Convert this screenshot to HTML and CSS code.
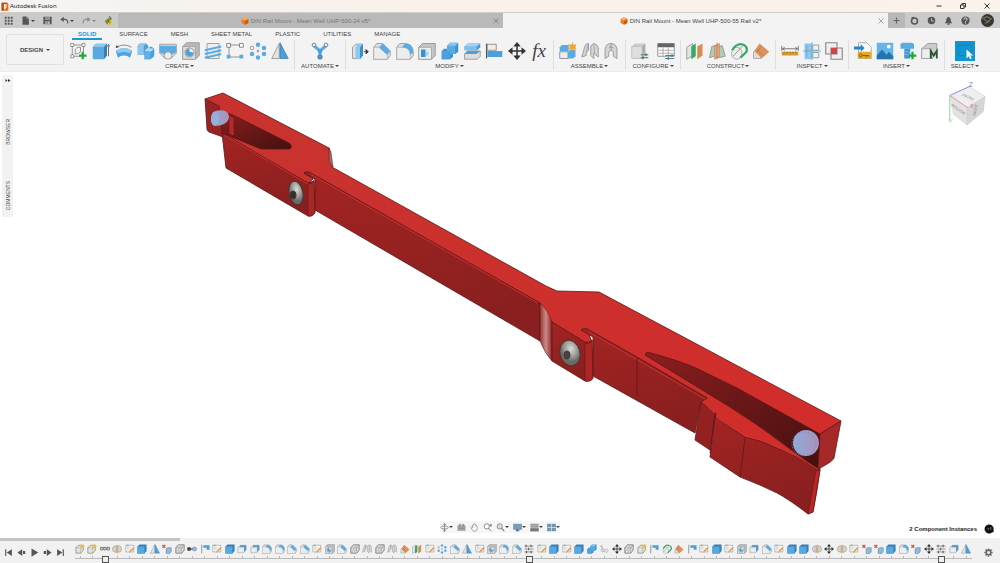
FILE: index.html
```
<!DOCTYPE html>
<html lang="en">
<head>
  <meta charset="UTF-8">
  <meta name="viewport" content="width=device-width, initial-scale=1.0">
  <title>Autodesk Fusion</title>
  <link rel="stylesheet" href="styles.css">
</head>
<body>

<!-- icon sprite -->
<svg class="sprite" aria-hidden="true">
  <symbol id="i-sketch" viewBox="0 0 24 24">
    <path d="M3 4h15M3 4v15M18 4v9M3 19h10" fill="none" stroke="#777" stroke-width="1"/>
    <path d="M7 16V11q0-4 7-4v6q-2 3-7 3z" fill="none" stroke="#777"/>
    <path d="M1 2h4v4H1zM16 2h4v4h-4zM1 17h4v4H1z" fill="#fff" stroke="#777"/>
    <path d="M17 13v10M12 18h10" stroke="#22a53c" stroke-width="3"/>
  </symbol>
  <symbol id="i-extrude" viewBox="0 0 24 24">
    <path d="M1 6l4-4h15l-4 4z" fill="#8ec8ee"/>
    <path d="M1 6h15v17H1z" fill="#59a9e0"/>
    <path d="M16 6l4-4v16l-4 5z" fill="#347fb8"/>
    <path d="M22 5v14M20.500 6L22 3l1.500 3" fill="none" stroke="#444"/>
  </symbol>
  <symbol id="i-revolve" viewBox="0 0 24 24">
    <path d="M1 12q11-8 22 0l-3 9q-3-3-8-3t-8 3z" fill="#4ea3df"/>
    <path d="M1 12q11-8 22 0l-4 3q-7-4-14 0z" fill="#91caef"/>
    <path d="M2 7q10-6 20 0" fill="none" stroke="#666"/>
    <path d="M1 8l1-4 3 3z" fill="#444"/>
  </symbol>
  <symbol id="i-loft" viewBox="0 0 24 24">
    <path d="M1 6q0-4 5-4h6l3 3v3l4-2 4 3v10l-5 4h-8v-6H1z" fill="#4b9fda"/>
    <path d="M1 6q0-4 5-4h6l-3 4v11H1z" fill="#8cc6ed"/>
    <path d="M10 12l4-4 9 1-5 4z" fill="#b7dcf4"/>
    <path d="M10 12l8 1v10h-8z" fill="#5fb0e5"/>
  </symbol>
  <symbol id="i-sweep" viewBox="0 0 24 24">
    <path d="M1 3h22v12l-7 7H8l-7-7z" fill="#e4e4e4" stroke="#888"/>
    <path d="M1 5h22v9l-6 3q-5-6-10 0l-6-3z" fill="#5aabe2"/>
    <circle cx="12" cy="18" r="5" fill="#eee" stroke="#888"/>
  </symbol>
  <symbol id="i-hole" viewBox="0 0 24 24">
    <path d="M1 6l5-5h17v17l-5 5H1z" fill="#b9b9b9" stroke="#8c8c8c"/>
    <path d="M1 6h17v17H1z" fill="#dcdcdc" stroke="#999"/>
    <circle cx="10" cy="14" r="6" fill="#f5f5f5" stroke="#777"/>
    <path d="M10 9a5 5 0 1 0 5 5l-5-1z" fill="#4b9fda"/>
  </symbol>
  <symbol id="i-thread" viewBox="0 0 24 24">
    <path d="M4 2h16v20H4z" fill="#eee" stroke="#888"/>
    <path d="M1 11l22-5M1 16l22-5M1 21l22-5" stroke="#5aabe2" stroke-width="2.500"/>
  </symbol>
  <symbol id="i-rect" viewBox="0 0 24 24">
    <path d="M4 4h16M4 4v16M4 20h16" fill="none" stroke="#777"/>
    <path d="M1 2h5v5H1zM18 2h5v5h-5z" fill="#fff" stroke="#666"/>
    <path d="M1 17h5v5H1zM18 17h5v5h-5z" fill="#5aabe2"/>
  </symbol>
  <symbol id="i-circpat" viewBox="0 0 24 24">
    <g fill="#5aabe2"><circle cx="12" cy="3.500" r="3"/><circle cx="20" cy="8" r="3"/><circle cx="20" cy="16" r="3"/><circle cx="12" cy="20.500" r="3"/><circle cx="4" cy="16" r="3"/></g>
    <circle cx="4" cy="8" r="2.500" fill="#eee" stroke="#888"/>
    <path d="M12 10v4M10 12h4" stroke="#777"/>
  </symbol>
  <symbol id="i-mirror" viewBox="0 0 24 24">
    <path d="M11 2v20H1z" fill="#e5e5e5" stroke="#888"/>
    <path d="M12 1v21h11z" fill="#4b9fda" stroke="#3a80b2"/>
  </symbol>
  <symbol id="i-automate" viewBox="0 0 24 24">
    <path d="M4 5l8 7 8-7M12 12v8" fill="none" stroke="#5aabe2" stroke-width="4"/>
    <g fill="#e9f3fa" stroke="#567"><circle cx="4" cy="4" r="2.500"/><circle cx="20" cy="4" r="2.500"/></g>
    <circle cx="12" cy="20" r="3" fill="#4b9fda" stroke="#567"/><circle cx="12" cy="12" r="3" fill="#4b9fda"/>
  </symbol>
  <symbol id="i-press" viewBox="0 0 24 24">
    <path d="M2 7l4-4h5l-3 4v15H2z" fill="#e1e1e1" stroke="#888"/>
    <path d="M6 7l4-5h6l-4 5v16H6z" fill="#8ec8ee"/>
    <path d="M12 7l4-5v16l-4 5z" fill="#3c8fcb"/>
    <path d="M17 13h5M20 10l3 3-3 3z" fill="#333" stroke="#333"/>
  </symbol>
  <symbol id="i-chamfer" viewBox="0 0 24 24">
    <path d="M1 7l4-5h8l10 10v6l-4 5H1z" fill="#dedede" stroke="#8a8a8a"/>
    <path d="M1 7h7l11 10v6H1z" fill="#ededed" stroke="#aaa"/>
    <path d="M8 7l5-5 10 10-4 5z" fill="#5aabe2"/>
  </symbol>
  <symbol id="i-fillet" viewBox="0 0 24 24">
    <path d="M1 7l4-5h6q12 0 12 12v4l-4 5H1z" fill="#dedede" stroke="#8a8a8a"/>
    <path d="M1 7h7q11 0 11 10v6H1z" fill="#ededed" stroke="#aaa"/>
    <path d="M8 7l4-5q11 0 11 12l-4 3q0-10-11-10z" fill="#5aabe2"/>
  </symbol>
  <symbol id="i-shell" viewBox="0 0 24 24">
    <path d="M1 7l5-5h17v16l-5 5H1z" fill="#c5c5c5" stroke="#888"/>
    <path d="M1 7h17v16H1z" fill="#eee" stroke="#999"/>
    <path d="M4 10h11v10H4z" fill="#d7e9f5"/><path d="M4 10h6v10H4z" fill="#3c8fcb"/><path d="M10 14h5l-5 6z" fill="#8ec8ee"/>
  </symbol>
  <symbol id="i-combine" viewBox="0 0 24 24">
    <path d="M8 5l4-4h11v12l-4 3h-3v4l-4 3H1V12l3-3h4z" fill="#3f94d1"/>
    <path d="M8 5h11v11H8z" fill="#5aabe2"/><path d="M1 12h11v11H1z" fill="#4ba1dd"/>
    <path d="M8 5l4-4h11l-4 4z" fill="#8ec8ee"/>
  </symbol>
  <symbol id="i-split" viewBox="0 0 24 24">
    <path d="M2 6l4-4h17v5l-4 4H2z" fill="#4b9fda"/><path d="M2 6h16v5H2z" fill="#7cc0ec"/><path d="M2 6l4-4h17l-5 4z" fill="#a5d4f2"/>
    <path d="M2 16l4-4h17v7l-4 4H2z" fill="#ddd" stroke="#888"/><path d="M2 16l4-4h17l-5 4z" fill="#4b9fda"/>
  </symbol>
  <symbol id="i-align" viewBox="0 0 24 24">
    <path d="M2 2v20" stroke="#555" stroke-width="1.500"/>
    <path d="M3 3h12v8H3z" fill="#eee" stroke="#777"/><path d="M3 12h20v8H3z" fill="#4b9fda"/>
  </symbol>
  <symbol id="i-move" viewBox="0 0 24 24">
    <path d="M12 3v18M3 12h18" stroke="#333" stroke-width="2"/>
    <path d="M12 0l5 6H7zM12 24l5-6H7zM0 12l6-5v10zM24 12l-6-5v10z" fill="#333"/>
  </symbol>
  <symbol id="i-newcomp" viewBox="0 0 24 24">
    <path d="M1 7l3-3h9v8H1z" fill="#5aabe2"/><path d="M1 13h11v9H1z" fill="#eee" stroke="#777"/>
    <path d="M12 13l3-3h7v9l-3 3h-7z" fill="#5aabe2"/>
    <path d="M18 0l1.500 4 4-1.500-2 4 2 3-4-.5L18 13l-1.500-4-4 .5 2-3-2-4 4 1.500z" fill="#f2a51e"/>
  </symbol>
  <symbol id="i-joint" viewBox="0 0 24 24">
    <path d="M1 20l4-14q1-4 5-4v9l-3 3v4zM23 20V8q-2-6-6-6l-4 3v13l4 4v-7z" fill="#d5d5d5" stroke="#888"/>
    <path d="M10 2L7 14M17 2l1 13" fill="none" stroke="#999"/>
  </symbol>
  <symbol id="i-asbuilt" viewBox="0 0 24 24">
    <path d="M4 22V10q1-8 8-8t8 8v12l-5-3v-6l-3-2-3 2v6z" fill="#d5d5d5" stroke="#888"/>
    <path d="M12 2v9M9 8q3-3 6 0" fill="none" stroke="#888"/>
  </symbol>
  <symbol id="i-config" viewBox="0 0 24 24">
    <path d="M1 6l4-4h14v16l-4 4H1z" fill="#ccc"/><path d="M1 6h14v16H1z" fill="#dedede" stroke="#bbb"/><path d="M15 6l4-4v13h-4z" fill="#aaa"/>
    <path d="M13 17h10M13 21h10M20 15v4M16 19v4" stroke="#4c6b68" stroke-width="1.500"/>
  </symbol>
  <symbol id="i-table" viewBox="0 0 24 24">
    <path d="M1 2h22v17H1z" fill="#fff" stroke="#777"/><path d="M1 2h22v5H1z" fill="#666"/>
    <path d="M2 11h20M2 15h20M8 7v12M15 7v12" stroke="#999"/>
    <path d="M11 18h12M11 22h12M20 16v4M15 20v4" stroke="#4b7f9e" stroke-width="1.500"/>
  </symbol>
  <symbol id="i-plane" viewBox="0 0 24 24">
    <path d="M1 7l8-5v16l-8 5z" fill="#e4e4e4" stroke="#888"/><path d="M7 6l6-4v17l-6 4z" fill="#36a96b"/><path d="M15 6l7-4v16l-7 5z" fill="#d98b52"/>
  </symbol>
  <symbol id="i-midplane" viewBox="0 0 24 24">
    <path d="M5 6l6-2v14l-9 3zM14 6l5-1 4 14-9 2z" fill="#a9cfb7" stroke="#888"/><path d="M9 6l6-4v17l-6 4z" fill="#e7b695" stroke="#c87945"/>
    <path d="M12 1v22" stroke="#c65a32"/>
  </symbol>
  <symbol id="i-tangent" viewBox="0 0 24 24">
    <ellipse cx="9" cy="15" rx="7" ry="8" fill="#eee" stroke="#999"/>
    <path d="M3 11Q8 2 16 3q8 2 6 10l-8 8" fill="none" stroke="#32a968" stroke-width="3"/>
    <path d="M4 19L17 5" stroke="#777"/>
  </symbol>
  <symbol id="i-angle" viewBox="0 0 24 24">
    <path d="M2 13l10-9v18H2z" fill="#ddd" stroke="#999"/><path d="M10 2l13 11-10 9L3 12z" fill="#dd935e"/>
    <path d="M7 10l8 8M12 6l-6 8" stroke="#ac7044"/>
  </symbol>
  <symbol id="i-measure" viewBox="0 0 24 24">
    <path d="M1 5v7M23 5v7M2 9h20M5 7L2 9l3 2M19 7l3 2-3 2" fill="none" stroke="#555"/><path d="M1 13h22v5H1z" fill="#d69a2c"/><path d="M4 13v2M8 13v2M12 13v2M16 13v2M20 13v2" stroke="#825e1b"/>
  </symbol>
  <symbol id="i-section" viewBox="0 0 24 24">
    <path d="M2 2h10v21H2z" fill="#8fc7ec"/><path d="M13 4h8v7h-8zM13 14h8v7h-8z" fill="#eaf3f8" stroke="#789"/>
    <path d="M0 12h24M12 0v24M5 4v16" stroke="#6a9dc0"/>
  </symbol>
  <symbol id="i-interfere" viewBox="0 0 24 24">
    <path d="M1 1h15v15H1zM8 8h15v15H8z" fill="#eee" stroke="#888" stroke-width="1.500"/><path d="M8 8h8v8H8z" fill="#d54245"/>
  </symbol>
  <symbol id="i-derive" viewBox="0 0 24 24">
    <path d="M6 1h11l6 6v15H6z" fill="#f7f7f7" stroke="#999"/><path d="M5 13h18v9H5z" fill="#e7aa21"/>
    <path d="M0 6h9V3l5 5-5 5v-3H0z" fill="#2585c7"/><circle cx="9" cy="18" r="2" fill="none" stroke="#6d5012"/><path d="M11 18h9M16 18v3M19 18v2" stroke="#6d5012"/>
  </symbol>
  <symbol id="i-image" viewBox="0 0 24 24">
    <path d="M1 1h22v22H1z" fill="#66b5e9"/><path d="M1 18l7-8 6 7 3-4 6 6v4H1z" fill="#2275ad"/><circle cx="17" cy="6" r="2.500" fill="#fff"/>
  </symbol>
  <symbol id="i-fastener" viewBox="0 0 24 24">
    <path d="M2 3l2-2h14l2 2v6H2z" fill="#5aabe2"/><path d="M7 9h8v13H7z" fill="#4195d2"/><path d="M7 12l8 2M7 16l8 2" stroke="#8ec8ee"/>
    <path d="M18 13v10M13 18h10" stroke="#22a53c" stroke-width="3"/>
  </symbol>
  <symbol id="i-mcmaster" viewBox="0 0 24 24">
    <path d="M1 9l8-7h12v10l-6 10H1z" fill="#ccc" stroke="#888"/><path d="M1 9h13v13H1z" fill="#eee" stroke="#999"/>
    <path d="M13 22V12l4 6 4-6v10" fill="none" stroke="#285630" stroke-width="2.500"/>
  </symbol>
  <symbol id="i-sk" viewBox="0 0 24 24">
    <path d="M2 3h19v16H2z" fill="#fafafa" stroke="#999" stroke-width="1.500"/><path d="M5 8h10M5 12h8M7 5v11" stroke="#a9b9bd"/>
    <path d="M9 21l2-5L20 7l3 3-9 9z" fill="#e0a45e"/><path d="M3 3h6" stroke="#5dbb87" stroke-width="2"/>
  </symbol>
  <symbol id="i-comp" viewBox="0 0 24 24">
    <path d="M2 9l6-6h12v12l-6 7H2z" fill="#e6e3dd" stroke="#777" stroke-width="1.500"/><path d="M2 9h12v13M14 9l6-6" fill="none" stroke="#888"/>
    <circle cx="18" cy="6" r="5" fill="#f3bd45"/>
  </symbol>
  <symbol id="i-dots" viewBox="0 0 24 24"><path d="M1 8h6v6H1zM9 8h6v6H9zM17 8h6v6h-6z" fill="#ddd" stroke="#666" stroke-width="2"/></symbol>
  <symbol id="i-link" viewBox="0 0 24 24"><circle cx="5" cy="12" r="5" fill="#444"/><path d="M9 12h8" stroke="#555" stroke-width="3"/><circle cx="18" cy="12" r="5" fill="#8ebddd" stroke="#669"/></symbol>
  <symbol id="i-flag" viewBox="0 0 24 24"><path d="M4 2v21" stroke="#aaa" stroke-width="3"/><path d="M8 3h15v11h-7V9H8z" fill="#4b9fda"/></symbol>
  <symbol id="i-solid" viewBox="0 0 24 24"><path d="M1 6l5-5h17v16l-5 6H1z" fill="#347fb8"/><path d="M1 6h17v17H1z" fill="#55a8e0"/></symbol>
  <symbol id="i-grey" viewBox="0 0 24 24"><path d="M2 9l6-7h14v13l-6 7H2z" fill="#ddd" stroke="#777" stroke-width="2"/><path d="M2 9h14v13M16 9l6-7M5 18l9-13M9 20l10-14" fill="none" stroke="#888"/></symbol>
  <symbol id="i-offset" viewBox="0 0 24 24"><path d="M2 9l6-6h14v11l-6 7H2z" fill="#e0e6e9" stroke="#888"/><path d="M8 3h14v11l-5 6V8H5z" fill="#5899c4"/><path d="M5 11h8v8H5z" fill="#eee"/></symbol>
  <symbol id="i-rigid" viewBox="0 0 24 24"><path d="M1 2l7 7M8 2L1 9" stroke="#c6543f" stroke-width="3"/><path d="M10 12l3-3h9v10l-4 4h-8z" fill="#8dbbd9" stroke="#5c88a7" stroke-width="1.500"/></symbol>
  <symbol id="i-tjoint" viewBox="0 0 24 24"><path d="M10 4q-9 0-9 8t9 8zM14 4q9 0 9 8t-9 8z" fill="#d7d7c8" stroke="#999" stroke-width="1.500"/><path d="M12 2v20" stroke="#d6874b" stroke-width="2"/></symbol>
  <symbol id="i-bars" viewBox="0 0 24 24"><path d="M1 5h22M1 12h22M1 19h22" stroke="#888" stroke-width="2"/><path d="M5 2v6M17 2v6M11 9v6M6 16v6M17 16v6" stroke="#666" stroke-width="3"/></symbol>
  <symbol id="i-pair" viewBox="0 0 24 24"><path d="M2 3l8 9M7 2v8" stroke="#aaa" stroke-width="2"/><circle cx="9" cy="15" r="4" fill="#ddd" stroke="#888"/><circle cx="18" cy="16" r="4" fill="#eee" stroke="#888"/></symbol>
  <symbol id="i-cube" viewBox="0 0 24 24"><path d="M12 1l10 5v12l-10 5L2 18V6z" fill="#ed7b24"/><path d="M12 1l10 5-10 5L2 6z" fill="#ffab5d"/><path d="M12 11l10-5v12l-10 5z" fill="#c95d13"/></symbol>
  <symbol id="i-monitor" viewBox="0 0 24 24"><path d="M1 3h22v14H1z" fill="#779dbd" stroke="#567"/><path d="M9 17h6v4H9zM6 21h12" fill="#567" stroke="#567"/></symbol>
</svg>

<div class="app">
  <header class="titlebar">
    <svg class="logo" viewBox="0 0 20 24"><path d="M1 2h15l3 3v18H1z" fill="#ec6a12"/><path d="M1 2h15L5 23H1z" fill="#b84b0a"/><path d="M7 19V6h8v3h-4v3h3v3h-3v4z" fill="#fff"/></svg>
    <h1>Autodesk Fusion</h1>
    <div class="window-buttons">
      <button aria-label="Minimize"><svg viewBox="0 0 12 12"><path d="M1 6h10"/></svg></button>
      <button aria-label="Restore"><svg viewBox="0 0 12 12"><path d="M1 4h7v7H1zM4 4V1h7v7H8"/></svg></button>
      <button aria-label="Close"><svg viewBox="0 0 12 12"><path d="M1 1l10 10M11 1L1 11"/></svg></button>
    </div>
  </header>

  <div class="tabbar">
    <div class="quick">
      <button aria-label="Data panel"><svg viewBox="0 0 24 24"><path d="M2 2h5v5H2zM10 2h5v5h-5zM18 2h5v5h-5zM2 10h5v5H2zM10 10h5v5h-5zM18 10h5v5h-5zM2 18h5v5H2zM10 18h5v5h-5zM18 18h5v5h-5z" fill="#555"/></svg></button>
      <button aria-label="File"><svg viewBox="0 0 24 24"><path d="M4 1h11l6 6v16H4z" fill="#555"/><path d="M15 1v6h6" fill="none" stroke="#ccc"/></svg><i class="caret"></i></button>
      <button aria-label="Save"><svg viewBox="0 0 24 24"><path d="M1 2h22v20H1z" fill="#555"/><path d="M6 3h12v7H6zM6 14h12v7H6z" fill="#bbb"/><path d="M8 6h8M11 14v7" stroke="#555" stroke-width="2"/></svg></button>
      <button aria-label="Undo"><svg viewBox="0 0 24 24"><path d="M5 9h9q7 1 7 11" fill="none" stroke="#555" stroke-width="3"/><path d="M10 2v14L1 9z" fill="#555"/></svg><i class="caret"></i></button>
      <button aria-label="Redo" class="faded"><svg viewBox="0 0 24 24"><path d="M19 9h-9q-7 1-7 11" fill="none" stroke="#555" stroke-width="3"/><path d="M14 2v14l9-7z" fill="#555"/></svg><i class="caret"></i></button>
      <button aria-label="Update"><svg viewBox="0 0 24 24"><path d="M2 13l12-9 3 12-9 7z" fill="#6d8f36"/><path d="M14 1l5 6-9 9" fill="none" stroke="#586b35" stroke-width="3"/><path d="M16 9l8 14H9z" fill="#f2cc35"/><path d="M16 14v4M16 20v2" stroke="#333" stroke-width="2"/></svg></button>
    </div>
    <div class="doc-tab">
      <a href="#"><svg><use href="#i-cube"/></svg>DIN Rail Mount - Mean Well UHP-500-24 v5*</a>
      <button aria-label="Close tab"><svg viewBox="0 0 12 12"><path d="M1 1l10 10M11 1L1 11"/></svg></button>
    </div>
    <div class="doc-tab active">
      <a href="#"><svg><use href="#i-cube"/></svg>DIN Rail Mount - Mean Well UHP-500-55 Rail v2*</a>
      <button aria-label="Close tab"><svg viewBox="0 0 12 12"><path d="M1 1l10 10M11 1L1 11"/></svg></button>
    </div>
    <button class="new-tab" aria-label="New design"><svg viewBox="0 0 12 12"><path d="M6 1v10M1 6h10"/></svg></button>
    <div class="account">
      <button aria-label="Extensions"><svg viewBox="0 0 24 24"><circle cx="12" cy="13" r="8" fill="none" stroke="#555" stroke-width="4"/><path d="M3 3l8-1-3 8z" fill="#555"/></svg></button>
      <button aria-label="Job status"><svg viewBox="0 0 24 24"><circle cx="12" cy="12" r="10" fill="#555"/><path d="M12 6v7h6" fill="none" stroke="#ddd" stroke-width="2"/></svg></button>
      <button aria-label="Notifications"><svg viewBox="0 0 24 24"><path d="M2 19q4-3 4-9t6-8q6 2 6 8t4 9zM9 20h6v3H9z" fill="#555"/></svg></button>
      <button aria-label="Help"><svg viewBox="0 0 24 24"><circle cx="12" cy="12" r="11" fill="#555"/><path d="M8 9q0-4 4-4t4 4q0 2-4 5v1M12 17v3" fill="none" stroke="#eee" stroke-width="2.500"/></svg></button>
      <button aria-label="Profile" class="avatar"><svg viewBox="0 0 24 24"><circle cx="12" cy="12" r="12" fill="#38352f"/><path d="M4 8l7-3 8 4-7 5zM7 17l9-3" fill="none" stroke="#77736b" stroke-width="2"/></svg></button>
    </div>
  </div>

  <div class="toolbar">
    <button class="workspace">DESIGN <i class="caret"></i></button>
    <div class="ribbon">
      <nav class="ribbon-tabs">
        <a href="#" class="active">SOLID</a>
        <a href="#">SURFACE</a>
        <a href="#">MESH</a>
        <a href="#">SHEET METAL</a>
        <a href="#">PLASTIC</a>
        <a href="#">UTILITIES</a>
        <a href="#">MANAGE</a>
      </nav>
      <div class="groups">
        <section class="group">
          <div class="icons">
            <button aria-label="Create sketch"><svg><use href="#i-sketch"/></svg></button>
            <button aria-label="Extrude"><svg><use href="#i-extrude"/></svg></button>
            <button aria-label="Revolve"><svg><use href="#i-revolve"/></svg></button>
            <button aria-label="Sweep"><svg><use href="#i-loft"/></svg></button>
            <button aria-label="Loft"><svg><use href="#i-sweep"/></svg></button>
            <button aria-label="Hole"><svg><use href="#i-hole"/></svg></button>
            <button aria-label="Thread"><svg><use href="#i-thread"/></svg></button>
            <button aria-label="Rectangular pattern"><svg><use href="#i-rect"/></svg></button>
            <button aria-label="Circular pattern"><svg><use href="#i-circpat"/></svg></button>
            <button aria-label="Mirror"><svg><use href="#i-mirror"/></svg></button>
          </div>
          <button class="group-name">CREATE<i class="caret"></i></button>
        </section>
        <section class="group single">
          <div class="icons">
            <button aria-label="Automated modeling"><svg><use href="#i-automate"/></svg></button>
          </div>
          <button class="group-name">AUTOMATE<i class="caret"></i></button>
        </section>
        <section class="group">
          <div class="icons">
            <button aria-label="Press pull"><svg><use href="#i-press"/></svg></button>
            <button aria-label="Chamfer"><svg><use href="#i-chamfer"/></svg></button>
            <button aria-label="Fillet"><svg><use href="#i-fillet"/></svg></button>
            <button aria-label="Shell"><svg><use href="#i-shell"/></svg></button>
            <button aria-label="Combine"><svg><use href="#i-combine"/></svg></button>
            <button aria-label="Split body"><svg><use href="#i-split"/></svg></button>
            <button aria-label="Align"><svg><use href="#i-align"/></svg></button>
            <button aria-label="Move"><svg><use href="#i-move"/></svg></button>
            <button class="fx">fx</button>
          </div>
          <button class="group-name">MODIFY<i class="caret"></i></button>
        </section>
        <section class="group">
          <div class="icons">
            <button aria-label="New component"><svg><use href="#i-newcomp"/></svg></button>
            <button aria-label="Joint"><svg><use href="#i-joint"/></svg></button>
            <button aria-label="As-built joint"><svg><use href="#i-asbuilt"/></svg></button>
          </div>
          <button class="group-name">ASSEMBLE<i class="caret"></i></button>
        </section>
        <section class="group">
          <div class="icons">
            <button aria-label="Configure"><svg><use href="#i-config"/></svg></button>
            <button aria-label="Configuration table"><svg><use href="#i-table"/></svg></button>
          </div>
          <button class="group-name">CONFIGURE<i class="caret"></i></button>
        </section>
        <section class="group">
          <div class="icons">
            <button aria-label="Offset plane"><svg><use href="#i-plane"/></svg></button>
            <button aria-label="Midplane"><svg><use href="#i-midplane"/></svg></button>
            <button aria-label="Tangent plane"><svg><use href="#i-tangent"/></svg></button>
            <button aria-label="Plane at angle"><svg><use href="#i-angle"/></svg></button>
          </div>
          <button class="group-name">CONSTRUCT<i class="caret"></i></button>
        </section>
        <section class="group">
          <div class="icons">
            <button aria-label="Measure"><svg><use href="#i-measure"/></svg></button>
            <button aria-label="Section analysis"><svg><use href="#i-section"/></svg></button>
            <button aria-label="Interference"><svg><use href="#i-interfere"/></svg></button>
          </div>
          <button class="group-name">INSPECT<i class="caret"></i></button>
        </section>
        <section class="group">
          <div class="icons">
            <button aria-label="Derive"><svg><use href="#i-derive"/></svg></button>
            <button aria-label="Canvas"><svg><use href="#i-image"/></svg></button>
            <button aria-label="Insert fastener"><svg><use href="#i-fastener"/></svg></button>
            <button aria-label="McMaster-Carr"><svg><use href="#i-mcmaster"/></svg></button>
          </div>
          <button class="group-name">INSERT<i class="caret"></i></button>
        </section>
        <section class="group single">
          <div class="icons">
            <button aria-label="Select" class="select"><svg viewBox="0 0 24 24"><path d="M3 4h18v14H3z" fill="none" stroke="#2a6f95" stroke-dasharray="2 1"/><path d="M14 10v12l3-3 2 4 2-1-2-4h4z" fill="#fff"/></svg></button>
          </div>
          <button class="group-name">SELECT<i class="caret"></i></button>
        </section>
      </div>
    </div>
  </div>

  <main class="viewport">
    <svg class="model" viewBox="0 72 1000 466" role="img" aria-label="DIN rail mount model">
      <defs>
        <linearGradient id="front" x1="0" y1="0" x2="0.300" y2="1"><stop offset="0" stop-color="#a32423"/><stop offset="1" stop-color="#8a1f1f"/></linearGradient>
        <linearGradient id="top" x1="0" y1="0" x2="1" y2="1"><stop offset="0" stop-color="#c73330"/><stop offset="1" stop-color="#d22d2a"/></linearGradient>
        <linearGradient id="pocket" x1="0" y1="0" x2="1" y2="1"><stop offset="0" stop-color="#8c1e1e"/><stop offset="1" stop-color="#451010"/></linearGradient>
        <linearGradient id="bend" x1="0" y1="0" x2="1" y2="0"><stop offset="0" stop-color="#9c3432"/><stop offset="0.500" stop-color="#c98a87"/><stop offset="1" stop-color="#8f2524"/></linearGradient>
        <radialGradient id="steel" cx="0.600" cy="0.350"><stop offset="0" stop-color="#dcdcd6"/><stop offset="0.600" stop-color="#9a9e99"/><stop offset="1" stop-color="#6b6b67"/></radialGradient>
        <linearGradient id="pin" x1="0" y1="0" x2="1" y2="0"><stop offset="0" stop-color="#8eabd8"/><stop offset="1" stop-color="#aa91ba"/></linearGradient>
      </defs>
      <g stroke="#5a1616" stroke-linejoin="round" stroke-width=".800">
        <!-- top face -->
        <path fill="url(#top)" d="M205 99L223 93 329 148 332 167 546 286 557 291 599 292 841 421 820 434 820 470 797 458 777 450 745 438 715 418 701 402 707 398 587 329 592 342 585 345 552 322 540 303 304 173 313 179 308 184 222 133 218 110z"/>
        <path fill="#9c6a67" d="M329 148L331 152 333 167 329 162z" stroke-width=".500"/>
        <!-- left end -->
        <path fill="#972423" d="M205 99l14 7 4 31-14-5q-2-1-2-3z"/>
        <path fill="url(#pocket)" d="M222 133V112l8 2 5 2 54 27q4 3 1 6h-29z"/>
        <path fill="#b32a29" stroke-width=".500" d="M229 115l5 3v18l-5-2z"/>
        <path fill="url(#front)" d="M222 133l86 50 6-2 1 31q-2 5-7 4l-82-48z"/>
        <path fill="none" stroke="#cf3a37" d="M224 135l84 49"/>
        <path fill="#a82826" stroke-width=".500" d="M308 184q4 1 6-4l1 33q-3 4-7 3z"/>
        <!-- rail -->
        <path fill="url(#front)" d="M304 173q3-3 7 0L540 303v38L315 210v-31z"/>
        <path fill="none" stroke="#cf3a37" d="M312 175l226 128"/>
        <path fill="url(#bend)" stroke-width=".500" d="M540 303q8 7 12 19v39q-7-7-12-20z"/>
        <path fill="url(#front)" d="M552 322l33 20q6 1 7-2l1 38q-2 4-8 3l-33-20z"/>
        <path fill="#ab2625" stroke-width=".500" d="M585 343q6 1 7-3l1 38q-2 4-8 3z"/>
        <path fill="url(#front)" d="M593 376V337l-12-7q2-3 6-1l50 28 70 41-6 4-6 31z"/>
        <path fill="none" stroke="#cf3a37" d="M589 332l116 67"/>
        <path fill="none" d="M637 358v38"/>
        <!-- right end -->
        <path fill="url(#pocket)" d="M645 355q1-4 6-2 33 9 49 17l37 18 83 46-2 35-28-20q-27-21-60-42z"/>
        <path fill="none" d="M737 388l-2 22" stroke-width=".500"/>
        <path fill="#a52928" d="M820 434l21-13-7 37q-1 3-12 9l-4 2z"/>
        <path fill="#952020" d="M701 402l15 11-1 5-5 32-15-10z"/>
        <path fill="#cb302d" stroke="none" d="M702 402l5-3 9 12-1 3z"/>
        <path fill="url(#front)" d="M715 417l30 20q16 3 32 11 20 8 43 22-3 22-7 42l-5 2q-18-14-31-21-16-8-37-16l-30-20z"/>
        <path fill="#ba2826" stroke-width=".500" d="M816 471l4-1-7 42-5 2z"/>
        <path fill="none" stroke="#cf3a37" d="M717 418l28 18q16 3 32 11 20 8 41 22"/>
        <path fill="none" d="M745 438l-5 39M715 413l-5 40"/>
      </g>
      <!-- screws -->
      <g stroke="#4a3533">
        <ellipse cx="296" cy="193" rx="7" ry="12" fill="url(#steel)" transform="rotate(-12 296 193)"/>
        <ellipse cx="293" cy="195" rx="3" ry="4" fill="#38302e"/>
        <ellipse cx="570" cy="353" rx="10" ry="13" fill="url(#steel)" transform="rotate(-15 570 353)"/>
        <ellipse cx="567" cy="355" rx="3" ry="4" fill="#444340"/>
      </g>
      <path d="M213 112q6-3 12-1 4 2 4 6t-5 7q-5 3-11 1-4-6 0-13z" fill="url(#pin)"/>
      <ellipse cx="215" cy="119" rx="4" ry="7" fill="#94b1dc"/>
      <circle cx="806" cy="443" r="13" fill="url(#pin)"/>
      <circle cx="804" cy="444" r="12" fill="none" stroke="#6f8dbd" stroke-dasharray="1 2"/>
    </svg>

    <aside class="side-panel">
      <button aria-label="Expand panels"><svg viewBox="0 0 12 8"><path d="M1 1l4 3-4 3zM6 1l5 3-5 3z" fill="#333"/></svg></button>
      <button class="side-tab">BROWSER</button>
      <button class="side-tab">COMMENTS</button>
    </aside>

    <svg class="viewcube" viewBox="0 0 44 50" role="img" aria-label="View cube">
      <path d="M4 15l21-9 16 10-19 12z" fill="#eee"/><path d="M4 15l18 13v18L7 34z" fill="#e2e2e4"/><path d="M22 28l19-12-2 16-17 14z" fill="#d5d5d8"/>
      <path d="M4 15L26 5" stroke="#7d83dd"/><path d="M4 15v27" stroke="#7bdc8c"/><path d="M4 15l19 13" stroke="#e28f8f"/>
      <path d="M22 28v18M22 28l19-12M7 34l15 12 17-14 2-16L25 6" fill="none" stroke="#c5c5c8" stroke-width=".500"/>
      <text x="23" y="17" transform="rotate(205 23 16)">FRONT</text>
      <text x="13" y="30" transform="rotate(216 13 29)">BOTTOM</text>
      <text x="31" y="31" transform="rotate(-80 31 30)">RIGHT</text>
      <text class="axis-z" x="26" y="6">Z</text>
      <text class="axis-y" x="5" y="44">Y</text>
      <text class="axis-x" x="27" y="28">X</text>
    </svg>

    <div class="nav-tools">
      <button aria-label="Orbit"><svg viewBox="0 0 24 24"><path d="M12 1v22M8 5l4-4 4 4M8 19l4 4 4-4" fill="none" stroke="#777" stroke-width="2"/><ellipse cx="12" cy="12" rx="10" ry="4" fill="none" stroke="#777" stroke-width="2"/></svg><i class="caret"></i></button>
      <button aria-label="Look at"><svg viewBox="0 0 24 24"><path d="M2 8h20v12H2zM5 3h5v5H5zM14 3h5v5h-5z" fill="#aaa" stroke="#777"/><path d="M5 14h14" stroke="#777" stroke-width="2"/></svg></button>
      <button aria-label="Pan"><svg viewBox="0 0 24 24"><path d="M7 13V5q2-2 3 0V3q2-2 3 0v2q2-2 3 0v3q3-1 3 1v7q-1 6-7 6-5 0-6-4l-4-6q1-3 5 1z" fill="#fff" stroke="#666" stroke-width="1.500"/></svg></button>
      <button aria-label="Zoom"><svg viewBox="0 0 24 24"><circle cx="10" cy="9" r="7" fill="#fff" stroke="#666" stroke-width="2"/><path d="M15 14l7 8M21 2v8M17 6h7" stroke="#666" stroke-width="2"/></svg></button>
      <button aria-label="Fit"><svg viewBox="0 0 24 24"><circle cx="10" cy="9" r="7" fill="#ddd" stroke="#777" stroke-width="2"/><path d="M15 14l7 8" stroke="#666" stroke-width="3"/></svg><i class="caret"></i></button>
      <button aria-label="Display settings"><svg><use href="#i-monitor"/></svg><i class="caret"></i></button>
      <button aria-label="Grid and snaps"><svg viewBox="0 0 24 24"><path d="M1 2h22v20H1z" fill="#999"/><path d="M1 7h22M1 12h22" stroke="#ddd"/><path d="M1 15h22v7H1z" fill="#777"/></svg><i class="caret"></i></button>
      <button aria-label="Viewports"><svg viewBox="0 0 24 24"><path d="M1 3h22v18H1z" fill="#6f94b5" stroke="#567"/><path d="M12 3v18M1 12h22" stroke="#dce6ee" stroke-width="2"/></svg><i class="caret"></i></button>
    </div>

    <div class="status">
      <span>2 Component Instances</span>
      <svg viewBox="0 0 24 24"><path d="M12 1a11 11 0 1 0 8 19h3V9q-3-8-11-8z" fill="#111"/><path d="M7 13l3-3M11 15v-6M14 9h4l-3 3 3 3" stroke="#bbb" fill="none"/></svg>
    </div>
  </main>

  <footer class="timeline">
    <div class="scroll-thumb"></div>
    <div class="timeline-row">
      <div class="playback">
        <button aria-label="Go to start"><svg viewBox="0 0 24 24"><path d="M3 3h3v18H3zM21 3v18L7 12z"/></svg></button>
        <button aria-label="Step back"><svg viewBox="0 0 24 24"><path d="M14 3v18L1 12zM16 8h6v8h-6z"/></svg></button>
        <button aria-label="Play"><svg viewBox="0 0 24 24"><path d="M4 1v22l18-11z"/></svg></button>
        <button aria-label="Step forward"><svg viewBox="0 0 24 24"><path d="M10 3v18l13-9zM2 8h6v8H2z"/></svg></button>
        <button aria-label="Go to end"><svg viewBox="0 0 24 24"><path d="M18 3h3v18h-3zM3 3v18l14-9z"/></svg></button>
      </div>
      <div class="features" id="features"></div>
      <button class="settings" aria-label="Timeline settings"><svg viewBox="0 0 24 24"><circle cx="12" cy="12" r="6" fill="none" stroke="#666" stroke-width="4"/><path d="M12 1v4M12 19v4M1 12h4M19 12h4M4 4l3 3M17 17l3 3M20 4l-3 3M7 17l-3 3" stroke="#666" stroke-width="4"/></svg></button>
    </div>
  </footer>
</div>

<script src="timeline.js"></script>
</body>
</html>
```
FILE: styles.css
```
* {
    box-sizing: border-box;
}

body {
    margin: 0;
    font-family: "Liberation Sans", Arial, sans-serif;
    font-size: 6px;
    line-height: 8px;
    color: #444;
    background-color: #fff;
}

button {
    display: flex;
    align-items: center;
    justify-content: center;
    padding: 0;
    border: none;
    background: none;
    font: inherit;
    color: inherit;
    cursor: pointer;
}

a {
    color: inherit;
    text-decoration: none;
}

svg {
    display: block;
    flex-shrink: 0;
}

.sprite {
    position: absolute;
    width: 0;
    height: 0;
}

.app {
    display: flex;
    flex-direction: column;
    min-height: 100vh;
}

.caret {
    width: 0;
    height: 0;
    margin-left: 1px;
    border-left: 2px solid transparent;
    border-right: 2px solid transparent;
    border-top: 2px solid #444;
}

/* title bar */
.titlebar {
    display: flex;
    align-items: center;
    height: 13px;
    padding-left: 1px;
    background: linear-gradient(to right, #f5f3f2, #faf1e8 50%, #faf3ea);
    border-bottom: 1px solid #cfccc9;
}

.logo {
    width: 8px;
    height: 9px;
}

.titlebar h1 {
    margin: 0 0 0 1px;
    font-family: "Noto Sans", sans-serif;
    font-size: 6px;
    font-weight: normal;
    color: #222;
}

.window-buttons {
    display: flex;
    gap: 18px;
    margin-left: auto;
    padding-right: 10px;
}

.window-buttons svg,
.doc-tab button svg {
    width: 6px;
    height: 6px;
    fill: none;
    stroke: #555;
    stroke-width: 1;
}

.window-buttons svg {
    stroke: #333;
    stroke-width: 2;
}

/* document tabs */
.tabbar {
    display: flex;
    height: 15px;
    background-color: #cacaca;
}

.quick {
    display: flex;
    align-items: center;
    gap: 8px;
    width: 118px;
    padding-left: 4px;
}

.quick svg {
    width: 9px;
    height: 9px;
}

.faded {
    opacity: 0.5;
}

.doc-tab {
    display: flex;
    flex: 1;
    align-items: center;
    padding-right: 4px;
    background-color: #b9b9b9;
    color: #777;
}

.doc-tab a {
    display: flex;
    flex: 1;
    align-items: center;
    justify-content: center;
    gap: 2px;
    white-space: nowrap;
}

.doc-tab a svg {
    width: 8px;
    height: 8px;
}

.doc-tab.active {
    background-color: #f3f3f3;
    color: #444;
}

.new-tab {
    width: 17px;
    background-color: #b8b8b8;
}

.new-tab svg {
    width: 7px;
    height: 7px;
    stroke: #666;
    stroke-width: 2;
}

.account {
    display: flex;
    align-items: center;
    gap: 8px;
    width: 95px;
    padding-left: 5px;
}

.account svg {
    width: 9px;
    height: 9px;
}

.account .avatar {
    margin-left: 3px;
}

.account .avatar svg {
    width: 13px;
    height: 13px;
}

/* toolbar */
.toolbar {
    display: flex;
    height: 44px;
    background-color: #f3f3f3;
    border-bottom: 1px solid #ececec;
}

.workspace {
    gap: 2px;
    width: 58px;
    height: 31px;
    margin: 6px 1px 0 6px;
    border: 1px solid #e0e0e0;
    border-radius: 2px;
    font-weight: bold;
}

.ribbon {
    flex: 1;
}

.ribbon-tabs {
    display: flex;
    gap: 11px;
    padding-left: 7px;
}

.ribbon-tabs a {
    height: 12px;
    padding: 2px 6px 0;
    border-bottom: 2px solid transparent;
}

.ribbon-tabs .active {
    border-bottom-color: #1f97d0;
    color: #1f97d0;
    font-weight: bold;
}

.groups {
    display: grid;
    grid-template-columns: 230px 51px 208px 72px 55px 95px 73px 96px 40px;
}

.group {
    display: flex;
    flex-direction: column;
    gap: 2px;
    padding: 2px 5px 0;
    border-right: 1px solid #dedede;
}

.group:last-child {
    border-right: none;
}

.icons {
    display: flex;
    justify-content: space-between;
    height: 18px;
}

.single .icons {
    justify-content: center;
}

.icons svg {
    width: 18px;
    height: 18px;
}

.icons .fx {
    width: 18px;
    font-family: "Liberation Serif", serif;
    font-size: 19px;
    font-style: italic;
    line-height: 18px;
}

.icons .select {
    width: 20px;
    height: 20px;
    margin-top: -1px;
    background-color: #0f95d2;
}

.group-name {
    align-self: center;
    white-space: nowrap;
}

/* viewport */
.viewport {
    position: relative;
    display: flex;
    flex: 1;
    background-color: #fff;
}

.model {
    flex: 1;
    min-width: 0;
    width: 100%;
}

.side-panel {
    position: absolute;
    top: 3px;
    left: 2px;
    display: flex;
    flex-direction: column;
    align-items: center;
    gap: 36px;
    width: 11px;
    height: 142px;
    padding-top: 3px;
    background-color: #f2f2f2;
}

.side-panel svg {
    width: 6px;
    height: 5px;
}

.side-tab {
    font-size: 5px;
    writing-mode: vertical-rl;
    transform: rotate(180deg);
}

.viewcube {
    position: absolute;
    top: 9px;
    right: 12px;
    width: 42px;
    height: 48px;
    font-size: 4px;
    fill: #888;
    text-anchor: middle;
}

.viewcube .axis-z {
    font-size: 7px;
    fill: #7d83dd;
}

.viewcube .axis-y {
    font-size: 6px;
    fill: #7bdc8c;
}

.viewcube .axis-x {
    font-size: 5px;
    fill: #e05c5c;
}

.nav-tools {
    position: absolute;
    bottom: 5px;
    left: 50%;
    display: flex;
    align-items: center;
    gap: 4px;
    height: 12px;
    background-color: #f6f6f6;
    transform: translateX(-50%);
}

.nav-tools svg {
    width: 9px;
    height: 9px;
}

.nav-tools .caret {
    margin-left: 0;
}

.status {
    position: absolute;
    right: 6px;
    bottom: 4px;
    display: flex;
    align-items: center;
    gap: 7px;
    font-weight: bold;
    color: #222;
}

.status svg {
    width: 10px;
    height: 10px;
}

/* timeline */
.timeline {
    height: 25px;
    background-color: #f1f1f1;
}

.scroll-thumb {
    width: 18%;
    height: 3px;
    background-color: #c4c4c4;
}

.timeline-row {
    display: flex;
    padding: 3px 7px 0 4px;
}

.playback {
    display: flex;
    align-items: center;
    gap: 4px;
    height: 16px;
    fill: #555;
}

.playback svg {
    width: 9px;
    height: 9px;
}

.features {
    position: relative;
    display: flex;
    flex: 1;
    justify-content: space-between;
    height: 15px;
    margin: 0 12px 0 10px;
    border-bottom: 1px solid #b8b8b8;
}

.feature {
    position: relative;
    flex-direction: column;
    gap: 2px;
    width: 10px;
    height: 14px;
}

.feature svg {
    width: 10px;
    height: 10px;
}

.feature::after {
    content: "";
    width: 1px;
    height: 2px;
    background-color: #b8b8b8;
}

.feature.grouped::before {
    content: "";
    position: absolute;
    top: 12px;
    left: 2px;
    width: 5px;
    height: 5px;
    border: 1px solid #555;
    background-color: #eee;
}

.settings {
    height: 16px;
}

.settings svg {
    width: 9px;
    height: 9px;
}
```
FILE: timeline.js
```
const features = [
    'comp', 'comp', 'dots', 'tjoint', 'sk', 'solid', 'mirror', 'rigid', 'grey', 'link', 'flag', 'sk',
    'solid', 'offset', 'offset', 'fillet', 'fillet', 'chamfer', 'chamfer', 'sk', 'hole', 'chamfer', 'grey', 'joint',
    'grey', 'joint', 'angle', 'plane', 'sk', 'circpat', 'chamfer', 'mirror', 'sk', 'hole', 'fillet', 'chamfer',
    'bars', 'sk', 'solid', 'sk', 'solid', 'combine', 'pair', 'move', 'grey', 'comp', 'flag', 'tangent',
    'angle', 'flag', 'sk', 'solid', 'sk', 'hole', 'offset', 'chamfer', 'sk', 'solid', 'solid', 'tjoint',
    'move', 'tjoint', 'sk', 'rigid', 'rigid', 'solid', 'fillet', 'rigid', 'move', 'bars', 'offset', 'mirror'
];

const list = document.getElementById('features');

features.forEach(name => {
    const button = document.createElement('button');
    button.className = 'feature';
    // collapsed groups get a marker on the line
    if (name === 'dots' || name === 'bars') {
        button.classList.add('grouped');
    }
    button.setAttribute('aria-label', name);
    button.innerHTML = '<svg><use href="#i-' + name + '"/></svg>';
    list.appendChild(button);
});
```
